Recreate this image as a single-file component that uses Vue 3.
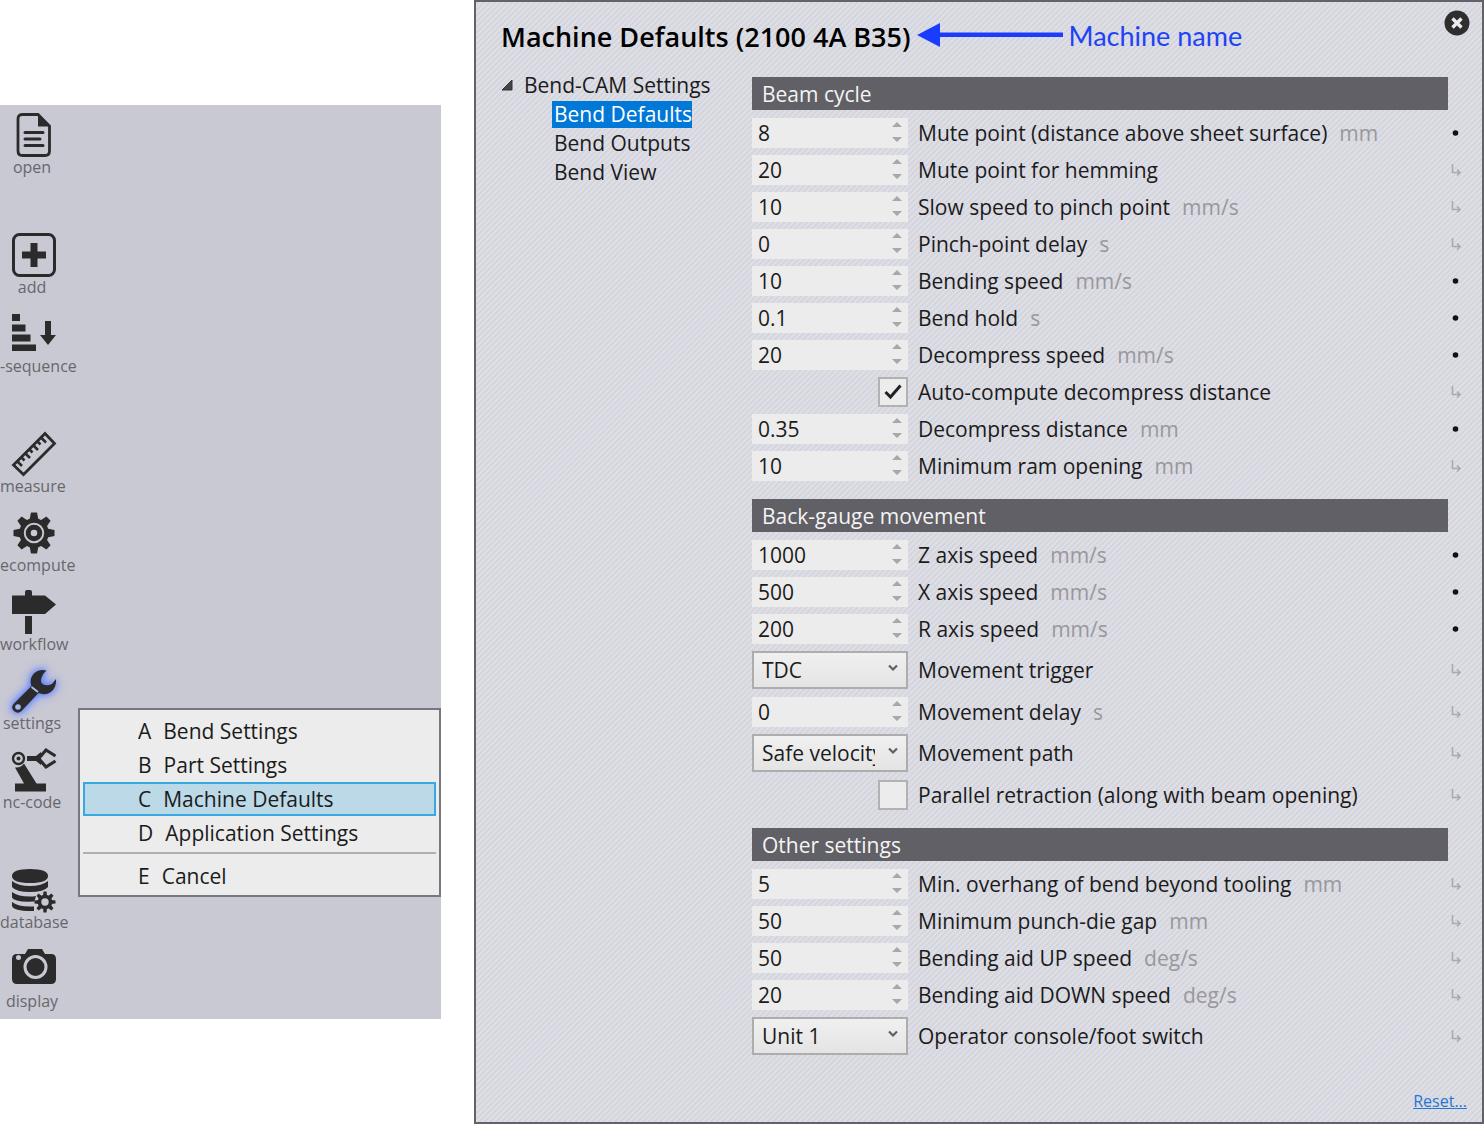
<script setup>
import { ref } from 'vue'

const menu = [
  ['A', 'Bend Settings'],
  ['B', 'Part Settings'],
  ['C', 'Machine Defaults'],
  ['D', 'Application Settings'],
  ['E', 'Cancel'],
]

const sections = ref([
  {
    title: 'Beam cycle',
    rows: [
      { type: 'number', value: '8', label: 'Mute point (distance above sheet surface)', unit: 'mm', dot: true },
      { type: 'number', value: '20', label: 'Mute point for hemming' },
      { type: 'number', value: '10', label: 'Slow speed to pinch point', unit: 'mm/s' },
      { type: 'number', value: '0', label: 'Pinch-point delay', unit: 's' },
      { type: 'number', value: '10', label: 'Bending speed', unit: 'mm/s', dot: true },
      { type: 'number', value: '0.1', label: 'Bend hold', unit: 's', dot: true },
      { type: 'number', value: '20', label: 'Decompress speed', unit: 'mm/s', dot: true },
      { type: 'check', value: true, label: 'Auto-compute decompress distance' },
      { type: 'number', value: '0.35', label: 'Decompress distance', unit: 'mm', dot: true },
      { type: 'number', value: '10', label: 'Minimum ram opening', unit: 'mm' },
    ],
  },
  {
    title: 'Back-gauge movement',
    rows: [
      { type: 'number', value: '1000', label: 'Z axis speed', unit: 'mm/s', dot: true },
      { type: 'number', value: '500', label: 'X axis speed', unit: 'mm/s', dot: true },
      { type: 'number', value: '200', label: 'R axis speed', unit: 'mm/s', dot: true },
      { type: 'select', value: 'TDC', label: 'Movement trigger' },
      { type: 'number', value: '0', label: 'Movement delay', unit: 's' },
      { type: 'select', value: 'Safe velocity', label: 'Movement path' },
      { type: 'check', value: false, label: 'Parallel retraction (along with beam opening)' },
    ],
  },
  {
    title: 'Other settings',
    rows: [
      { type: 'number', value: '5', label: 'Min. overhang of bend beyond tooling', unit: 'mm' },
      { type: 'number', value: '50', label: 'Minimum punch-die gap', unit: 'mm' },
      { type: 'number', value: '50', label: 'Bending aid UP speed', unit: 'deg/s' },
      { type: 'number', value: '20', label: 'Bending aid DOWN speed', unit: 'deg/s' },
      { type: 'select', value: 'Unit 1', label: 'Operator console/foot switch' },
    ],
  },
])

const gearTeeth = [0, 45, 90, 135, 180, 225, 270, 315]
</script>

<template>
  <div class="page">
    <aside class="app">
      <nav class="toolbar">
        <button class="tool gap-after">
          <svg viewBox="0 0 44 44"><path d="M10 1.500H26L37.500 13V38q0 4.500-4.500 4.500H10.500Q6 42.500 6 38V6Q6 1.500 10 1.500Z" fill="none" stroke="#2b2b2b" stroke-width="2.800" /><path d="M26 1L38 13.500H26Z" fill="#2b2b2b" /><path d="M13 19.500H31M13 26H28M13 32.500H31" stroke="#2b2b2b" stroke-width="3" stroke-linecap="round" /></svg>
          <span>open</span>
        </button>
        <button class="tool">
          <svg viewBox="0 0 44 44"><rect x="1.500" y="1.500" width="41" height="41" rx="6" fill="none" stroke="#2b2b2b" stroke-width="3" /><path d="M18.500 10h7v8.500H34v7h-8.500V34h-7v-8.500H10v-7h8.500Z" fill="#2b2b2b" /></svg>
          <span>add</span>
        </button>
        <button class="tool flush gap-after">
          <svg viewBox="0 0 44 44" fill="#2b2b2b"><path d="M0 2h8v7H0zM0 12.500h13.500v7H0zM0 22.500h18.500v7H0zM0 32.500h24v6.500H0zM33 9h6v14h5L36 33 28 23h5Z" /></svg>
          <span>-sequence</span>
        </button>
        <button class="tool flush">
          <svg viewBox="0 0 44 44"><path d="M1.500 33L33 1.500 42.500 11.500 11.500 42.500Z" fill="none" stroke="#2b2b2b" stroke-width="2.800" /><path d="M5 29l5 5M9 25l3.500 3.500M13 21l5 5M17 17l3.500 3.500M21 13l5 5M25 9l3.500 3.500M29 5.500l5 5" stroke="#2b2b2b" stroke-width="2.600" /></svg>
          <span>measure</span>
        </button>
        <button class="tool flush">
          <svg viewBox="0 0 44 44"><path v-for="a in gearTeeth" :key="a" d="M17.500 9L19 1.500h6L26.500 9Z" fill="#2b2b2b" :transform="`rotate(${a} 22 22)`" /><circle cx="22" cy="22" r="12.500" fill="none" stroke="#2b2b2b" stroke-width="4.500" /><circle cx="22" cy="22" r="5.800" fill="none" stroke="#2b2b2b" stroke-width="5" /></svg>
          <span>ecompute</span>
        </button>
        <button class="tool flush">
          <svg viewBox="0 0 44 44" fill="#2b2b2b"><path d="M0 5.500H13V2q0-2 2-2h3q2 0 2 2v3.500H33L44 14.500 33 24H0ZM13 26h7v18h-7Z" /></svg>
          <span>workflow</span>
        </button>
        <button class="tool active">
          <svg viewBox="0 0 44 44"><path d="M34.500 1.500C23 -1.500 16 9 19.500 17L1.500 35Q-1.500 39 2 42 6 45.500 9.500 42L26.500 24C36 28 45 21 44 10L40 15Q33 18 29.500 14 27.500 8 34.500 1.500Z" fill="#2b2b2b" /><path d="M19.500 18l6.500 5" stroke="#b5bde8" stroke-width="1.800" /><circle cx="6" cy="38" r="2.800" fill="#a9b7f0" /></svg>
          <span>settings</span>
        </button>
        <button class="tool gap-after">
          <svg viewBox="0 0 44 44"><circle cx="6.500" cy="10.500" r="5.500" fill="none" stroke="#2b2b2b" stroke-width="2.400" /><circle cx="6.500" cy="10.500" r="2" fill="#2b2b2b" /><path d="M15 8h9l5-4v13l-5-4h-9ZM3 19.500q6 .5 9-4L24.500 35.500H34v8H3v-8H12Z" fill="#2b2b2b" /><path d="M28 9L34 2 43.500 8M28 12L34 19 43.500 13" fill="none" stroke="#2b2b2b" stroke-width="3.200" /></svg>
          <span>nc-code</span>
        </button>
        <button class="tool flush">
          <svg viewBox="0 0 44 44"><path d="M0 8Q0 1 18 1t18 7-18 7T0 8ZM0 13q6 5 18 5t18-5v6q-4 5-18 5T0 19ZM0 24q6 4.500 18 4.500 3 0 6-.5-1 3-1.500 5.500Q2 34.500 0 29.500ZM0 34q6 4.500 18 4.500h4V43Q2 43.500 0 38Z" fill="#2b2b2b" /><g transform="translate(33 34)"><path v-for="a in gearTeeth" :key="a" d="M-2 -6L-1.500 -10.500h3L2 -6Z" fill="#2b2b2b" :transform="`rotate(${a})`" /><circle r="5.500" fill="none" stroke="#2b2b2b" stroke-width="3.600" /></g></svg>
          <span>database</span>
        </button>
        <button class="tool">
          <svg viewBox="0 0 44 44"><path d="M5 7h8l3-5h14l3 5h6q5 0 5 5v20q0 5-5 5H5q-5 0-5-5V12q0-5 5-5Z" fill="#2b2b2b" /><circle cx="23.500" cy="20" r="10.500" fill="#2b2b2b" stroke="#c9c9d3" stroke-width="3" /><circle cx="6.500" cy="10.500" r="2.500" fill="#c9c9d3" /></svg>
          <span>display</span>
        </button>
      </nav>
      <div class="menu" role="menu">
        <template v-for="[key, name] in menu" :key="key">
          <hr v-if="key === 'E'" />
          <button role="menuitem" :class="{ current: key === 'C' }"><span>{{ key }}</span><span>{{ name }}</span></button>
        </template>
      </div>
    </aside>

    <main class="dialog">
      <header>
        <h1>Machine Defaults (2100 4A B35)</h1>
        <svg class="arrow" viewBox="0 0 146 24"><path d="M0 12L23 0V9.500H146V14H23V24Z" fill="#1a3cff" /></svg>
        <span class="note">Machine name</span>
        <button class="close" aria-label="Close">
          <svg viewBox="0 0 26 26"><circle cx="13" cy="13" r="12.500" fill="#2e2e2e" /><path d="M8.500 8.500l9 9M17.500 8.500l-9 9" stroke="#ececf0" stroke-width="3.400" /></svg>
        </button>
      </header>
      <div class="content">
        <nav class="tree">
          <div class="root"><svg viewBox="0 0 12 12"><path d="M1 10L11 0V10Z" fill="#444" stroke="#333" /></svg>Bend-CAM Settings</div>
          <a href="#defaults" class="selected">Bend Defaults</a>
          <a href="#outputs">Bend Outputs</a>
          <a href="#view">Bend View</a>
        </nav>
        <form class="settings" @submit.prevent>
          <section v-for="(section, s) in sections" :key="section.title">
            <h2>{{ section.title }}</h2>
            <div v-for="(row, r) in section.rows" :key="row.label" class="row" :class="row.type">
              <div class="field">
                <template v-if="row.type === 'number'">
                  <input :id="`f${s}-${r}`" v-model="row.value" type="text" inputmode="decimal" />
                  <svg class="spin" viewBox="0 0 10 20"><path d="M0 5L5 0 10 5ZM0 15L5 20 10 15Z" fill="#a8a8a8" /></svg>
                </template>
                <template v-else-if="row.type === 'select'">
                  <select :id="`f${s}-${r}`" v-model="row.value"><option>{{ row.value }}</option></select>
                  <svg class="chevron" viewBox="0 0 10 8"><path d="M1 1.500L5 5.500 9 1.500" fill="none" stroke="#606060" stroke-width="2.200" /></svg>
                </template>
                <template v-else>
                  <input :id="`f${s}-${r}`" v-model="row.value" type="checkbox" />
                  <svg v-if="row.value" class="tick" viewBox="0 0 18 16"><path d="M1.500 8L6.500 13 16.500 1.500" fill="none" stroke="#222" stroke-width="3" /></svg>
                </template>
              </div>
              <label :for="`f${s}-${r}`">{{ row.label }}</label>
              <span class="unit">{{ row.unit }}</span>
              <svg class="mark" viewBox="0 0 12 14"><circle v-if="row.dot" cx="5.500" cy="7" r="2.800" fill="#111" /><path v-else d="M2.500 1V9.500H9M7 6.500L10 9.500 7 12.500" fill="none" stroke="#aaaaae" stroke-width="1.600" /></svg>
            </div>
          </section>
        </form>
      </div>
      <footer><a href="#reset">Reset...</a></footer>
    </main>
  </div>
</template>

<style>
body {
  margin: 0;
  background: #fff;
}
</style>

<style scoped>
* {
  box-sizing: border-box;
}

.page {
  display: flex;
  align-items: flex-start;
  gap: 33px;
  min-height: 100vh;
  font-family: "Open Sans", "Noto Sans", sans-serif;
  font-size: 21px;
  color: #1b1b1b;
}

button {
  font: inherit;
  color: inherit;
  background: none;
  border: 0;
  padding: 0;
}

.app {
  position: relative;
  flex: 0 0 441px;
  margin-top: 105px;
  padding-top: 8px;
  background: #c9c9d3;
}

.toolbar {
  display: flex;
  flex-direction: column;
  width: 68px;
}

.tool {
  display: flex;
  flex-direction: column;
  align-items: center;
  height: 79px;
  font-size: 16px;
  line-height: 20px;
  color: #67676b;
}

.tool:last-child {
  height: 72px;
}

.tool svg {
  width: 44px;
  height: 44px;
  overflow: visible;
}

.tool span {
  padding-right: 4px;
  white-space: nowrap;
}

.flush span {
  align-self: flex-start;
}

.gap-after {
  margin-bottom: 41px;
}

.active svg {
  filter: drop-shadow(0 0 3px #5b7cff) drop-shadow(0 0 5px #7b94ff);
}

.menu {
  position: absolute;
  left: 78px;
  right: 0;
  top: 603px;
  padding: 4px 3px 2px;
  border: 2px solid #77777f;
  background: #ececec;
}

.menu button {
  display: flex;
  gap: 12px;
  align-items: center;
  width: 100%;
  height: 34px;
  padding-left: 53px;
  border: 2px solid transparent;
}

.menu .current {
  background: #bcd9e7;
  border-color: #38a9e0;
}

.menu hr {
  margin: 2px 0 5px;
  border: 0;
  border-top: 2px solid #b0b0b0;
}

.dialog {
  flex: 1;
  display: flex;
  flex-direction: column;
  min-height: 100vh;
  padding: 10px 34px 9px 25px;
  border: 2px solid #626268;
  background: repeating-linear-gradient(135deg, #e1e1e8 0, #d2d2db 2px, #e1e1e8 4px);
}

header {
  display: flex;
  align-items: center;
  height: 46px;
  margin-right: -22px;
}

h1 {
  margin: 2px 0 0;
  font-size: 27px;
  font-weight: 600;
  color: #000;
  white-space: nowrap;
}

.arrow {
  width: 146px;
  height: 24px;
  margin: 0 6px;
}

.note {
  font-family: Lato, sans-serif;
  font-size: 27px;
  color: #2142f5;
  white-space: nowrap;
}

.close {
  width: 26px;
  height: 26px;
  margin: 0 0 24px auto;
}

.close svg {
  display: block;
}

.content {
  display: flex;
  align-items: flex-start;
  margin-top: 19px;
}

.tree {
  display: flex;
  flex-direction: column;
  align-items: flex-start;
  gap: 2px;
  flex: 0 0 251px;
  margin-top: -5px;
  line-height: 27px;
}

.root {
  display: flex;
  align-items: center;
}

.root svg {
  width: 12px;
  height: 12px;
  margin-right: 11px;
}

.tree a {
  margin-left: 51px;
  padding: 0 2px;
  color: inherit;
  text-decoration: none;
}

.tree .selected {
  padding-right: 0;
  background: #0078d7;
  color: #fff;
}

.settings {
  flex: 1;
  min-width: 0;
}

h2 {
  margin: 0 0 4px;
  padding: 1px 10px 0;
  font-size: 21px;
  font-weight: 400;
  line-height: 32px;
  color: #f4f4f4;
  background: #606066;
}

section + section {
  margin-top: 15px;
}

.row {
  display: flex;
  align-items: center;
  height: 37px;
  margin-right: -14px;
}

.row.select {
  height: 46px;
}

.field {
  position: relative;
  display: flex;
  justify-content: flex-end;
  width: 156px;
  margin-right: 10px;
}

.field input,
.field select {
  width: 100%;
  height: 30px;
  margin: 0;
  padding: 0 6px;
  border: 0;
  border-radius: 0;
  font: inherit;
  color: inherit;
  background: #ececec;
  appearance: none;
}

.field select {
  height: 38px;
  padding: 0 31px 0 8px;
  border: 2px solid #adadad;
  background: linear-gradient(#f0f0f0, #e4e4e4);
}

.field input[type="checkbox"] {
  width: 30px;
  border: 2px solid #b2b2b2;
}

.spin,
.chevron,
.tick {
  position: absolute;
  pointer-events: none;
}

.spin {
  right: 6px;
  top: 4px;
  width: 10px;
  height: 20px;
}

.chevron {
  right: 10px;
  top: 13px;
  width: 10px;
  height: 8px;
}

.tick {
  right: 6px;
  top: 7px;
  width: 18px;
  height: 16px;
}

label,
.unit {
  white-space: nowrap;
}

.unit {
  margin-left: 12px;
  color: #98989c;
}

.mark {
  width: 12px;
  height: 14px;
  margin-left: auto;
}

footer {
  margin: auto -19px 0 0;
  text-align: right;
  font-size: 16px;
  line-height: 24px;
}

footer a {
  color: #2478d0;
}
</style>
